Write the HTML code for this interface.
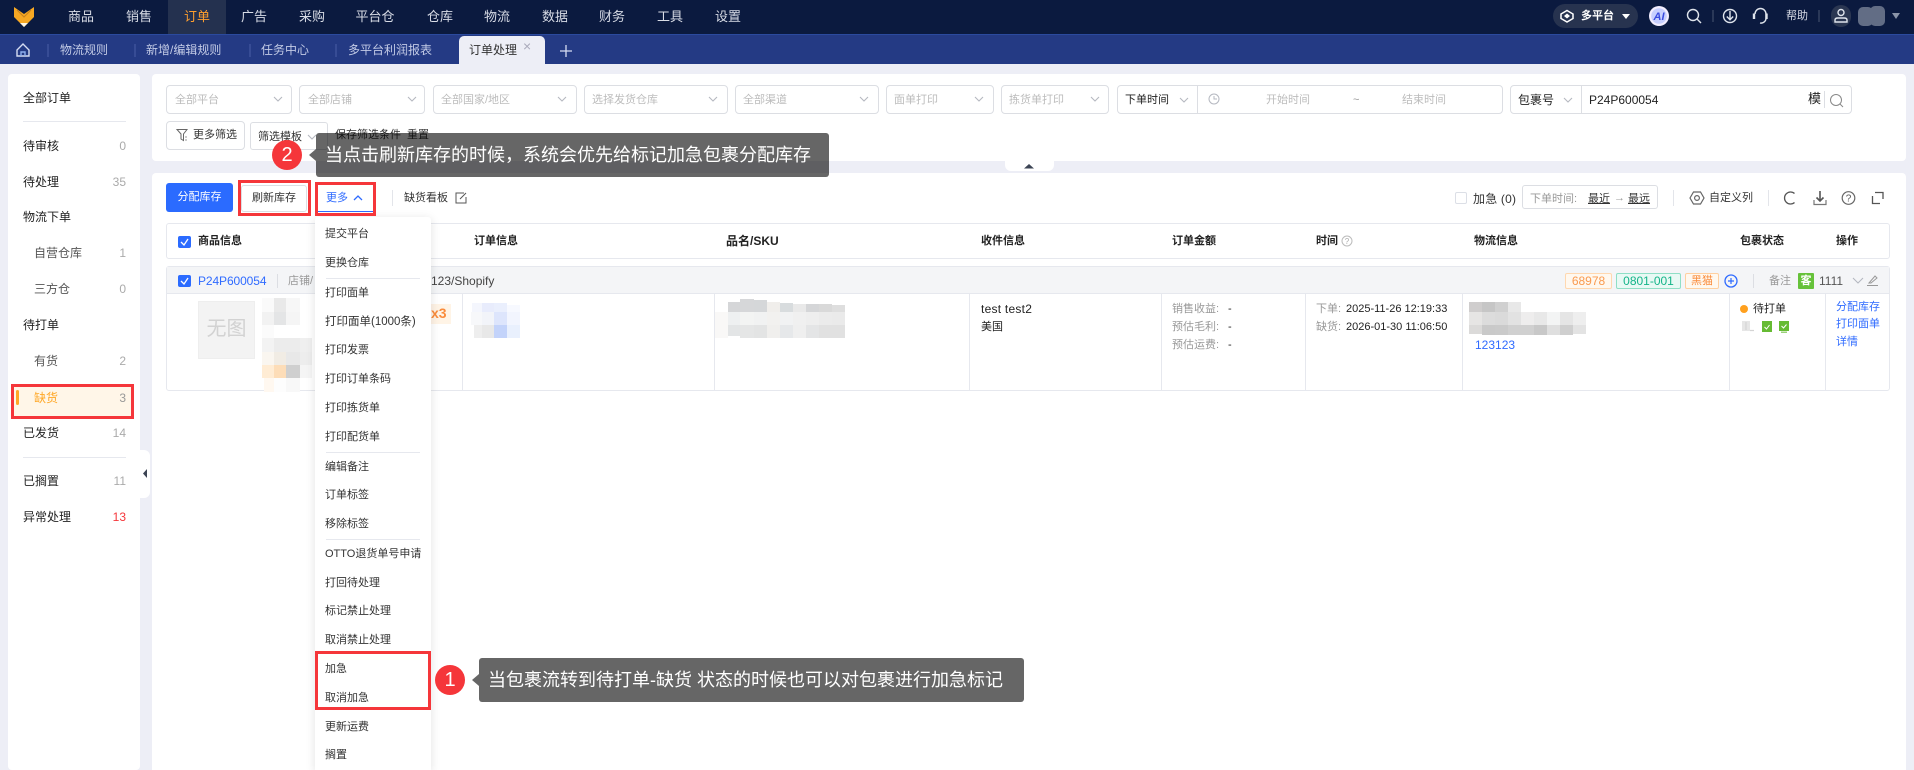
<!DOCTYPE html>
<html lang="zh"><head><meta charset="utf-8"><title>订单处理</title>
<style>
*{box-sizing:border-box}
html,body{margin:0;padding:0;width:1914px;height:770px;overflow:hidden;background:#edeef6;font-family:"Liberation Sans","Noto Sans CJK SC",sans-serif;font-size:11px;color:#222}
.a{position:absolute}
.t{position:absolute;white-space:nowrap;line-height:16px;height:16px}
.n{position:absolute;top:9px;width:58px;text-align:center;color:#d8dce6;font-size:13px;line-height:16px;white-space:nowrap}
.tb{position:absolute;top:42px;color:#c3cbe6;font-size:12px;line-height:16px;white-space:nowrap}
.s{font-size:12px;color:#222}
.c{font-size:12px;color:#aaa;text-align:right;width:30px}
.box{position:absolute;top:85px;height:29px;border:1px solid #dcdee3;border-radius:4px;background:#fff}
.ph{position:absolute;top:92px;color:#bcbcbc;white-space:nowrap;line-height:16px}
.b{font-weight:bold;color:#222;top:233px}
.m{position:absolute;left:325px;color:#333;line-height:16px;white-space:nowrap}
.hr{position:absolute;height:1px;background:#e6e8ee}
.v{position:absolute;width:1px;background:#e6e8ee;top:294px;height:96px}
.red{position:absolute;border:3px solid #f5363a}
.tip{position:absolute;background:rgba(0,0,0,.6);border-radius:3px;color:#fff;font-size:18px;white-space:nowrap}
.num{position:absolute;width:30px;height:30px;border-radius:50%;background:#f5363a;color:#fff;font-size:20px;line-height:30px;text-align:center}
.tag{position:absolute;top:273px;height:16px;border:1px solid;border-radius:2px;text-align:center;font-size:12px;line-height:15px}
.g{color:#999}
.bl{color:#2f6bff}
</style></head><body>

<!-- top nav -->
<div class="a" style="left:0;top:0;width:1914px;height:34px;background:#0b1a3f"></div>
<div class="a" style="left:168px;top:0;width:58px;height:34px;background:#24314f"></div>
<div class="n" style="left:52px">商品</div>
<div class="n" style="left:110px">销售</div>
<div class="n" style="left:168px;color:#ff9f2e">订单</div>
<div class="n" style="left:225px">广告</div>
<div class="n" style="left:283px">采购</div>
<div class="n" style="left:346px">平台仓</div>
<div class="n" style="left:411px">仓库</div>
<div class="n" style="left:468px">物流</div>
<div class="n" style="left:526px">数据</div>
<div class="n" style="left:583px">财务</div>
<div class="n" style="left:641px">工具</div>
<div class="n" style="left:699px">设置</div>
<div class="a" style="left:1553px;top:4px;width:85px;height:24px;border-radius:12px;background:#27334f"></div>
<div class="t" style="left:1581px;top:8px;color:#fff;font-weight:bold">多平台</div>
<div class="a" style="left:1831px;top:5px;width:20px;height:22px;border-radius:10px;background:#2b3752"></div>
<div class="t" style="left:1786px;top:8px;color:#d8dce6">帮助</div>

<!-- tab bar -->
<div class="a" style="left:0;top:34px;width:1914px;height:30px;background:#243a84;border-top:1px solid #2b4a9e"></div>
<div class="tb" style="left:60px">物流规则</div>
<div class="tb" style="left:146px">新增/编辑规则</div>
<div class="tb" style="left:261px">任务中心</div>
<div class="tb" style="left:348px">多平台利润报表</div>
<div class="a" style="left:459px;top:36px;width:86px;height:28px;background:#edeef6;border-radius:5px 5px 0 0"></div>
<div class="t" style="left:469px;top:42px;font-size:12px;color:#333">订单处理</div>
<div class="t" style="left:523px;top:38px;font-size:14px;color:#aab">×</div>

<!-- sidebar -->
<div class="a" style="left:8px;top:74px;width:132px;height:696px;background:#fff;border-radius:4px"></div>
<div class="a" style="left:140px;top:450px;width:10px;height:48px;background:#fff;border-radius:0 6px 6px 0"></div>
<div class="t s" style="left:23px;top:90px">全部订单</div>
<div class="hr" style="left:23px;top:121px;width:103px"></div>
<div class="t s" style="left:23px;top:138px">待审核</div><div class="t c" style="left:96px;top:138px">0</div>
<div class="t s" style="left:23px;top:174px">待处理</div><div class="t c" style="left:96px;top:174px">35</div>
<div class="t s" style="left:23px;top:209px">物流下单</div>
<div class="t s" style="left:34px;top:245px;color:#555">自营仓库</div><div class="t c" style="left:96px;top:245px">1</div>
<div class="t s" style="left:34px;top:281px;color:#555">三方仓</div><div class="t c" style="left:96px;top:281px">0</div>
<div class="t s" style="left:23px;top:317px">待打单</div>
<div class="t s" style="left:34px;top:353px;color:#555">有货</div><div class="t c" style="left:96px;top:353px">2</div>
<div class="a" style="left:14px;top:386px;width:118px;height:31px;background:#fff6e8"></div>
<div class="a" style="left:16px;top:390px;width:3px;height:15px;background:#ffa726;border-radius:2px"></div>
<div class="t s" style="left:34px;top:390px;color:#ffa726">缺货</div><div class="t c" style="left:96px;top:390px;color:#999">3</div>
<div class="t s" style="left:23px;top:425px">已发货</div><div class="t c" style="left:96px;top:425px">14</div>
<div class="hr" style="left:23px;top:457px;width:103px"></div>
<div class="t s" style="left:23px;top:473px">已搁置</div><div class="t c" style="left:96px;top:473px">11</div>
<div class="t s" style="left:23px;top:509px">异常处理</div><div class="t c" style="left:96px;top:509px;color:#f5363a">13</div>
<div class="red" style="left:11px;top:384px;width:123px;height:35px"></div>

<!-- filter panel -->
<div class="a" style="left:152px;top:74px;width:1754px;height:87px;background:#fff;border-radius:4px"></div>
<div class="a" style="left:1005px;top:161px;width:49px;height:10px;background:#fff;border-radius:0 0 6px 6px"></div>
<div class="box" style="left:166px;width:126px"></div><div class="ph" style="left:175px">全部平台</div>
<div class="box" style="left:299px;width:126px"></div><div class="ph" style="left:308px">全部店铺</div>
<div class="box" style="left:433px;width:144px"></div><div class="ph" style="left:441px">全部国家/地区</div>
<div class="box" style="left:584px;width:144px"></div><div class="ph" style="left:592px">选择发货仓库</div>
<div class="box" style="left:735px;width:144px"></div><div class="ph" style="left:743px">全部渠道</div>
<div class="box" style="left:886px;width:108px"></div><div class="ph" style="left:894px">面单打印</div>
<div class="box" style="left:1001px;width:108px"></div><div class="ph" style="left:1009px">拣货单打印</div>
<div class="box" style="left:1117px;width:386px"></div>
<div class="a" style="left:1197px;top:85px;width:1px;height:29px;background:#dcdee3"></div>
<div class="ph" style="left:1125px;color:#222">下单时间</div>
<div class="ph" style="left:1266px">开始时间</div>
<div class="ph" style="left:1353px;color:#999">~</div>
<div class="ph" style="left:1402px">结束时间</div>
<div class="box" style="left:1510px;width:342px"></div>
<div class="a" style="left:1581px;top:85px;width:1px;height:29px;background:#dcdee3"></div>
<div class="a" style="left:1824px;top:91px;width:1px;height:17px;background:#dcdee3"></div>
<div class="ph" style="left:1518px;color:#222;font-size:12px">包裹号</div>
<div class="ph" style="left:1589px;color:#222;font-size:12px">P24P600054</div>
<div class="ph" style="left:1808px;color:#222;font-size:13px;top:91px">模</div>

<div class="a" style="left:166px;top:121px;width:79px;height:29px;border:1px solid #dcdee3;border-radius:4px"></div>
<div class="t" style="left:193px;top:127px;color:#333">更多筛选</div>
<div class="a" style="left:250px;top:122px;width:78px;height:28px;border:1px solid #dcdee3;border-radius:3px"></div>
<div class="t" style="left:258px;top:129px;color:#333">筛选模板</div>
<div class="t" style="left:335px;top:127px;color:#333">保存筛选条件</div>
<div class="t" style="left:407px;top:127px;color:#333">重置</div>

<!-- main panel -->
<div class="a" style="left:152px;top:173px;width:1754px;height:597px;background:#fff;border-radius:4px 4px 0 0"></div>
<div class="a" style="left:166px;top:183px;width:67px;height:29px;background:#2b6bff;border-radius:3px;color:#fff;text-align:center;line-height:29px">分配库存</div>
<div class="a" style="left:241px;top:185px;width:66px;height:27px;border:1px solid #dcdee3;border-radius:3px;text-align:center;line-height:25px;color:#333">刷新库存</div>
<div class="t bl" style="left:326px;top:190px">更多</div>
<div class="a" style="left:317px;top:211px;width:57px;height:1px;background:#2f6bff"></div>
<div class="a" style="left:392px;top:190px;width:1px;height:16px;background:#e3e5ea"></div>
<div class="t" style="left:404px;top:190px;color:#333">缺货看板</div>

<div class="a" style="left:1455px;top:192px;width:12px;height:12px;border:1px solid #dcdfe6;border-radius:2px"></div>
<div class="t" style="left:1473px;top:191px;color:#333;font-size:12px;letter-spacing:.2px">加急 (0)</div>
<div class="a" style="left:1522px;top:185px;width:136px;height:24px;border:1px solid #dcdee3;border-radius:3px"></div>
<div class="t g" style="left:1530px;top:191px">下单时间:</div>
<div class="t" style="left:1588px;top:191px;text-decoration:underline;color:#333">最近</div>
<div class="t g" style="left:1614px;top:190px">→</div>
<div class="t" style="left:1628px;top:191px;text-decoration:underline;color:#333">最远</div>
<div class="a" style="left:1673px;top:190px;width:1px;height:16px;background:#e3e5ea"></div>
<div class="t" style="left:1709px;top:190px;color:#333">自定义列</div>
<div class="a" style="left:1768px;top:190px;width:1px;height:16px;background:#e3e5ea"></div>

<!-- table header -->
<div class="a" style="left:166px;top:223px;width:1724px;height:36px;border:1px solid #e6e8ee;border-radius:3px"></div>
<div class="t b" style="left:198px">商品信息</div>
<div class="t b" style="left:474px">订单信息</div>
<div class="t b" style="left:726px;font-size:12px">品名/SKU</div>
<div class="t b" style="left:981px">收件信息</div>
<div class="t b" style="left:1172px">订单金额</div>
<div class="t b" style="left:1316px">时间</div>
<div class="t b" style="left:1474px">物流信息</div>
<div class="t b" style="left:1740px">包裹状态</div>
<div class="t b" style="left:1836px">操作</div>

<!-- order row -->
<div class="a" style="left:166px;top:266px;width:1724px;height:125px;border:1px solid #e6e8ee;border-radius:3px;background:#fff"></div>
<div class="a" style="left:167px;top:267px;width:1722px;height:27px;background:#f4f5f7;border-bottom:1px solid #e6e8ee"></div>
<div class="t bl" style="left:198px;top:273px;font-size:12px;letter-spacing:-.1px">P24P600054</div>
<div class="a" style="left:277px;top:274px;width:1px;height:14px;background:#dcdee3"></div>
<div class="t g" style="left:288px;top:273px;font-size:11px">店铺/</div>
<div class="t" style="left:431px;top:273px;font-size:12px;color:#444">123/Shopify</div>
<div class="tag" style="left:1565px;width:47px;border-color:#ffd8b0;background:#fff8ef;color:#fa9a4f">68978</div>
<div class="tag" style="left:1616px;width:65px;border-color:#8fdfc6;background:#e8f9f4;color:#14b489">0801-001</div>
<div class="tag" style="left:1685px;width:34px;border-color:#ffd0a0;background:#fff8ef;color:#fa8c3c;font-size:11px">黑猫</div>
<div class="a" style="left:1753px;top:274px;width:1px;height:14px;background:#dcdee3"></div>
<div class="t g" style="left:1769px;top:273px">备注</div>
<div class="a" style="left:1798px;top:273px;width:16px;height:16px;background:#66c23a;color:#fff;font-weight:bold;text-align:center;line-height:16px;border-radius:1px">客</div>
<div class="t" style="left:1819px;top:273px;font-size:12px;color:#555">1111</div>

<div class="v" style="left:462px"></div><div class="v" style="left:714px"></div><div class="v" style="left:969px"></div><div class="v" style="left:1161px"></div><div class="v" style="left:1305px"></div><div class="v" style="left:1462px"></div><div class="v" style="left:1729px"></div><div class="v" style="left:1825px"></div>

<div class="a" style="left:198px;top:301px;width:57px;height:58px;background:#f3f3f3;border:1px solid #eee;color:#d2d2d2;font-size:20px;text-align:center;line-height:55px">无图</div>
<div class="a" style="left:427px;top:304px;width:24px;height:20px;background:#fff4e6"></div>
<div class="t" style="left:431px;top:305px;color:#fa8c3c;font-size:14px;font-weight:bold">x3</div>

<div class="t" style="left:981px;top:301px;font-size:12px;letter-spacing:.25px;color:#222">test test2</div>
<div class="t" style="left:981px;top:319px;color:#222">美国</div>
<div class="t g" style="left:1172px;top:301px">销售收益:</div><div class="t" style="left:1228px;top:301px">-</div>
<div class="t g" style="left:1172px;top:319px">预估毛利:</div><div class="t" style="left:1228px;top:319px">-</div>
<div class="t g" style="left:1172px;top:337px">预估运费:</div><div class="t" style="left:1228px;top:337px">-</div>
<div class="t g" style="left:1316px;top:301px">下单:</div><div class="t" style="left:1346px;top:301px">2025-11-26 12:19:33</div>
<div class="t g" style="left:1316px;top:319px">缺货:</div><div class="t" style="left:1346px;top:319px">2026-01-30 11:06:50</div>
<div class="t bl" style="left:1475px;top:337px;font-size:12px">123123</div>
<div class="a" style="left:1740px;top:305px;width:8px;height:8px;border-radius:50%;background:#ffa01e"></div>
<div class="t" style="left:1753px;top:301px">待打单</div>
<div class="t bl" style="left:1836px;top:299px">分配库存</div>
<div class="t bl" style="left:1836px;top:316px">打印面单</div>
<div class="t bl" style="left:1836px;top:334px">详情</div>

<!-- svg shapes, blurs, icons -->
<svg class="a" style="left:0;top:0" width="1914" height="770" viewBox="0 0 1914 770" fill="none">
<!-- logo -->
<path d="M14 7 L24 14 L34 7 V17 L24 27 L14 17 Z" fill="#f7a823"/>
<path d="M17 10 L24 17 L31 10" stroke="#c9821c" stroke-width="1"/>
<path d="M20 23 H28 L24 27 Z" fill="#fff8e6"/>
<!-- nav right icons -->
<g stroke="#fff" stroke-width="1.5"><path d="M1567 10.5 L1573 14 V18.5 L1567 22 L1561 18.5 V14 Z"/><path d="M1567 13.5 L1570 16 L1567 18.5 L1564 16 Z" fill="#fff" stroke="none"/></g>
<path d="M1622 14 H1630 L1626 19 Z" fill="#fff"/>
<circle cx="1659" cy="16" r="10" fill="#f3eeff"/><circle cx="1659" cy="16" r="7.8" fill="#c7cfff"/><text x="1659" y="20" text-anchor="middle" font-size="11" font-weight="bold" font-style="italic" fill="#3a4be0" font-family="Liberation Sans">AI</text>
<g stroke="#dfe4ec" stroke-width="1.4"><circle cx="1693" cy="15" r="5.5"/><path d="M1697 19 L1701 23"/>
<path d="M1713 10 V22" stroke="#4a5670" stroke-width="1"/>
<circle cx="1730" cy="16" r="6.5"/><path d="M1730 11 V19.5 M1726.8 16.5 L1730 19.7 L1733.2 16.5"/>
<path d="M1755 14 A5.5 5.5 0 0 1 1766 14 V18 A5 5 0 0 1 1760 23"/><path d="M1754 13.5 V19" stroke-width="2.4"/><path d="M1766.5 13.5 V19" stroke-width="2.4"/>
<path d="M1819 10 V22" stroke="#4a5670" stroke-width="1"/>
<circle cx="1841" cy="12.5" r="3"/><path d="M1835 22 V20 Q1835 18 1838 18 H1844 Q1847 18 1847 20 V22 Z"/></g>
<rect x="1858" y="7" width="15" height="19" rx="5" fill="#626d85"/><rect x="1870" y="6" width="15" height="20" rx="5" fill="#626d85"/>
<path d="M1892 13 H1900 L1896 19 Z" fill="#8a94a8"/>
<!-- tab icons -->
<path d="M17 50 L23 44 L29 50 V56 H17 Z" stroke="#d5dcf2" stroke-width="1.4"/><path d="M21 56 V52 H25 V56" stroke="#8fb0ee" stroke-width="1.4"/>
<g stroke="#4a5fa6"><path d="M48 44 V57 M135 44 V57 M250 44 V57 M336 44 V57"/></g>
<path d="M566 45 V57 M560 51 H572" stroke="#d5dcf2" stroke-width="1.3"/>
<!-- collapse triangle -->
<path d="M147 469 V478 L143 473.5 Z" fill="#3c4454"/>
<path d="M1024 168.5 H1034 L1029 164 Z" fill="#3c4454"/>
<!-- chevrons -->
<g stroke="#b5b8c0" stroke-width="1.1">
<path d="M274 97 L278 101 L282 97 M408 97 L412 101 L416 97 M558 97 L562 101 L566 97 M709 97 L713 101 L717 97 M860 97 L864 101 L868 97 M975 97 L979 101 L983 97 M1091 97 L1095 101 L1099 97 M1180 98 L1184 102 L1188 98 M1564 98 L1568 102 L1572 98 M308 135 L312 139 L316 135 M1853 278 L1858 283 L1863 278"/></g>
<circle cx="1214" cy="99" r="5" stroke="#b5b8c0"/><path d="M1214 96 V99 H1217" stroke="#b5b8c0"/>
<circle cx="1836" cy="100" r="5.5" stroke="#888"/><path d="M1840 104 L1843 107" stroke="#888"/>
<path d="M177 129.5 H187 L183.5 134 V140.5 L181 139 V134 Z" stroke="#666"/><path d="M185 137 H187 M185 140 H187" stroke="#999"/>
<path d="M354 200 L358 196 L362 200" stroke="#2f6bff" stroke-width="1.3"/>
<path d="M464 193 H456 V203 H466 V197 M460 199 L466 193" stroke="#555"/>
<path d="M1690 198 L1693.5 192 H1700.5 L1704 198 L1700.5 204 H1693.5 Z" stroke="#666" stroke-width="1.2"/><circle cx="1697" cy="198" r="2.4" stroke="#666" stroke-width="1.2"/>
<path d="M1794.5 193.5 A6 6 0 1 0 1794.5 202.5" stroke="#555" stroke-width="1.3"/>
<path d="M1820 191 V201 M1816.5 197.5 L1820 201 L1823.5 197.5" stroke="#555" stroke-width="1.6"/><path d="M1814 200 V204.5 H1826 V200" stroke="#777" stroke-width="1.2"/>
<circle cx="1848.5" cy="198" r="6.3" stroke="#666" stroke-width="1.2"/><text x="1848.5" y="201.5" text-anchor="middle" font-size="10" fill="#555" font-family="Liberation Sans">?</text>
<path d="M1875 192.5 H1883 V199 M1880 203.5 H1872.5 V196" stroke="#555" stroke-width="1.3"/>
<circle cx="1347" cy="241" r="5" stroke="#bbb"/><text x="1347" y="244" text-anchor="middle" font-size="8" fill="#aaa" font-family="Liberation Sans">?</text>
<!-- checkboxes -->
<g><rect x="178" y="236" width="13" height="12" rx="2" fill="#2b6bff"/><path d="M181 242 L184 245 L188 239" stroke="#fff" stroke-width="1.3"/>
<rect x="178" y="275" width="13" height="12" rx="2" fill="#2b6bff"/><path d="M181 281 L184 284 L188 278" stroke="#fff" stroke-width="1.3"/></g>
<!-- tag icons -->
<circle cx="1731" cy="281" r="6" stroke="#2f6bff" stroke-width="1.3"/><path d="M1731 278 V284 M1728 281 H1734" stroke="#2f6bff" stroke-width="1.2"/>
<path d="M1869 283 L1875 276 L1877 278 L1871 283 Z M1867 285.5 H1878" stroke="#999"/>
<!-- status icons -->
<path d="M1742 321 H1750 V331 H1742 Z" fill="#e6e6e6"/><path d="M1746 322 V330 M1750 330.5 H1754" stroke="#d4d4d4" stroke-width="1.2"/>
<rect x="1762" y="321" width="10" height="11" fill="#66bb33"/><path d="M1764.5 327 L1766.5 329 L1769.5 325" stroke="#fff"/>
<rect x="1779" y="321" width="10" height="10" fill="#66bb33"/><rect x="1781" y="331.5" width="6" height="1.5" fill="#9bd07a"/><path d="M1781.5 326 L1783.5 328 L1786.5 324.5" stroke="#fff"/>
<!-- blob 1 -->
<g>
<rect x="262" y="298" width="12" height="14" fill="#fafafa"/><rect x="274" y="298" width="12" height="14" fill="#e9e9e9"/><rect x="286" y="298" width="14" height="14" fill="#f7f7f7"/>
<rect x="262" y="312" width="12" height="13" fill="#f2f2f2"/><rect x="274" y="312" width="12" height="13" fill="#e4e5e6"/><rect x="286" y="312" width="14" height="13" fill="#f5f5f5"/>
<rect x="262" y="325" width="12" height="13" fill="#fbfbfb"/>
<rect x="262" y="338" width="12" height="14" fill="#f3f3f3"/><rect x="274" y="338" width="12" height="14" fill="#ececec"/><rect x="286" y="338" width="14" height="14" fill="#ececec"/><rect x="300" y="338" width="12" height="14" fill="#efefef"/>
<rect x="262" y="352" width="12" height="13" fill="#faf6f0"/><rect x="274" y="352" width="12" height="13" fill="#f1ece4"/><rect x="286" y="352" width="14" height="13" fill="#e8e8e8"/><rect x="300" y="352" width="12" height="13" fill="#ededed"/>
<rect x="262" y="365" width="12" height="13" fill="#ffecd4"/><rect x="274" y="365" width="12" height="13" fill="#fdddb8"/><rect x="286" y="365" width="14" height="13" fill="#cfcfcf"/><rect x="300" y="365" width="12" height="13" fill="#f5f5f5"/>
<rect x="264" y="378" width="10" height="14" fill="#fff8f0"/><rect x="274" y="378" width="12" height="14" fill="#fdfdfd"/><rect x="286" y="378" width="14" height="14" fill="#f8f8f8"/>
</g>
<!-- blob 2 -->
<g>
<rect x="472" y="303" width="10" height="9" fill="#f4f6fd"/><rect x="482" y="303" width="12" height="9" fill="#e8ecfc"/><rect x="494" y="303" width="13" height="9" fill="#eaeffd"/><rect x="507" y="305" width="13" height="7" fill="#f7f9ff"/>
<rect x="471" y="312" width="11" height="13" fill="#f7f8fa"/><rect x="482" y="312" width="12" height="13" fill="#f2f4f9"/><rect x="494" y="312" width="13" height="13" fill="#dde5fc"/><rect x="507" y="312" width="13" height="13" fill="#f2f5fe"/>
<rect x="474" y="325" width="8" height="13" fill="#eeeeee"/><rect x="482" y="325" width="12" height="13" fill="#e8e8e8"/><rect x="494" y="325" width="13" height="13" fill="#c3d3fa"/><rect x="507" y="325" width="13" height="13" fill="#e9f0fd"/>
</g>
<!-- blob 3 -->
<g>
<rect x="715" y="312" width="13" height="26" fill="#f9f8f7"/>
<rect x="728" y="302" width="12" height="10" fill="#d5d6d8"/><rect x="740" y="299" width="14" height="13" fill="#d6d7d9"/><rect x="754" y="300" width="13" height="12" fill="#d5d7d9"/><rect x="767" y="302" width="13" height="10" fill="#f0eeeb"/><rect x="780" y="303" width="13" height="9" fill="#d8dcde"/><rect x="793" y="304" width="13" height="8" fill="#e9e9e9"/><rect x="806" y="304" width="13" height="8" fill="#d5d6d8"/><rect x="819" y="304" width="13" height="8" fill="#d9d9d9"/><rect x="832" y="305" width="13" height="7" fill="#dedede"/>
<rect x="728" y="312" width="12" height="13" fill="#eef0f1"/><rect x="740" y="312" width="14" height="13" fill="#f3f4f3"/><rect x="754" y="312" width="13" height="13" fill="#f1f2f2"/><rect x="767" y="312" width="13" height="13" fill="#f2f1ef"/><rect x="780" y="312" width="13" height="13" fill="#f1f2f3"/><rect x="793" y="312" width="13" height="13" fill="#f0f0f0"/><rect x="806" y="312" width="13" height="13" fill="#eee"/><rect x="819" y="312" width="13" height="13" fill="#ebebeb"/><rect x="832" y="312" width="13" height="13" fill="#eaeaea"/>
<rect x="728" y="325" width="12" height="11" fill="#e3e5e6"/><rect x="740" y="325" width="14" height="13" fill="#e5e6e6"/><rect x="754" y="325" width="13" height="13" fill="#e3e4e4"/><rect x="767" y="325" width="13" height="13" fill="#f0efed"/><rect x="780" y="325" width="13" height="13" fill="#e6e8ea"/><rect x="793" y="325" width="13" height="13" fill="#efefef"/><rect x="806" y="325" width="13" height="13" fill="#e4e5e6"/><rect x="819" y="325" width="13" height="13" fill="#e1e1e1"/><rect x="832" y="325" width="13" height="13" fill="#e1e1e1"/>
</g>
<!-- blob 4 -->
<g>
<rect x="1469" y="302" width="13" height="10" fill="#cfcdcd"/><rect x="1482" y="302" width="13" height="10" fill="#c6c6c6"/><rect x="1495" y="302" width="13" height="10" fill="#d0d0d0"/><rect x="1508" y="302" width="13" height="10" fill="#e8e8e8"/>
<rect x="1469" y="312" width="13" height="13" fill="#e6e5e4"/><rect x="1482" y="312" width="13" height="13" fill="#dcdcdc"/><rect x="1495" y="312" width="13" height="13" fill="#dadada"/><rect x="1508" y="312" width="13" height="13" fill="#e2e2e2"/><rect x="1521" y="312" width="13" height="13" fill="#eeeded"/><rect x="1534" y="312" width="13" height="13" fill="#e8e8e8"/><rect x="1547" y="312" width="13" height="13" fill="#f3f4f4"/><rect x="1560" y="312" width="13" height="13" fill="#e5e5e5"/><rect x="1573" y="312" width="13" height="13" fill="#eee"/>
<rect x="1469" y="325" width="13" height="9" fill="#dbdad9"/><rect x="1482" y="325" width="13" height="10" fill="#c9c9c9"/><rect x="1495" y="325" width="13" height="10" fill="#cacaca"/><rect x="1508" y="325" width="13" height="10" fill="#d0d0d0"/><rect x="1521" y="325" width="13" height="10" fill="#d0d0d0"/><rect x="1534" y="325" width="13" height="10" fill="#c8c8c8"/><rect x="1547" y="325" width="13" height="10" fill="#dfdfdf"/><rect x="1560" y="325" width="13" height="10" fill="#cfcfcf"/><rect x="1573" y="325" width="13" height="9" fill="#e3e3e3"/>
</g>
</svg>

<!-- dropdown menu -->
<div class="a" style="left:315px;top:217px;width:116px;height:553px;background:#fff;border-radius:3px 3px 0 0;box-shadow:0 2px 10px rgba(0,0,0,.12)"></div>
<div class="m" style="top:226px">提交平台</div>
<div class="m" style="top:255px">更换仓库</div>
<div class="hr" style="left:326px;top:278px;width:94px"></div>
<div class="m" style="top:285px">打印面单</div>
<div class="m" style="top:314px;font-size:11.5px">打印面单(1000条)</div>
<div class="m" style="top:342px">打印发票</div>
<div class="m" style="top:371px">打印订单条码</div>
<div class="m" style="top:400px">打印拣货单</div>
<div class="m" style="top:429px">打印配货单</div>
<div class="hr" style="left:326px;top:452px;width:94px"></div>
<div class="m" style="top:459px">编辑备注</div>
<div class="m" style="top:487px">订单标签</div>
<div class="m" style="top:516px">移除标签</div>
<div class="hr" style="left:326px;top:539px;width:94px"></div>
<div class="m" style="top:546px">OTTO退货单号申请</div>
<div class="m" style="top:575px">打回待处理</div>
<div class="m" style="top:603px">标记禁止处理</div>
<div class="m" style="top:632px">取消禁止处理</div>
<div class="m" style="top:661px">加急</div>
<div class="m" style="top:690px">取消加急</div>
<div class="m" style="top:719px">更新运费</div>
<div class="m" style="top:747px">搁置</div>

<!-- red highlights -->
<div class="red" style="left:238px;top:180px;width:73px;height:36px"></div>
<div class="red" style="left:315px;top:182px;width:61px;height:34px"></div>
<div class="red" style="left:315px;top:651px;width:116px;height:59px"></div>

<!-- tooltips -->
<div class="tip" style="left:316px;top:133px;width:513px;height:44px;line-height:44px;padding-left:9px">当点击刷新库存的时候，系统会优先给标记加急包裹分配库存</div>
<div class="a" style="left:309px;top:149px;width:0;height:0;border:6px solid transparent;border-left:0;border-right:7px solid rgba(0,0,0,.6)"></div>
<div class="num" style="left:272px;top:140px">2</div>
<div class="tip" style="left:479px;top:658px;width:545px;height:44px;line-height:44px;padding-left:9px">当包裹流转到待打单-缺货 状态的时候也可以对包裹进行加急标记</div>
<div class="a" style="left:472px;top:674px;width:0;height:0;border:6px solid transparent;border-left:0;border-right:7px solid rgba(0,0,0,.6)"></div>
<div class="num" style="left:435px;top:665px">1</div>
</body></html>
